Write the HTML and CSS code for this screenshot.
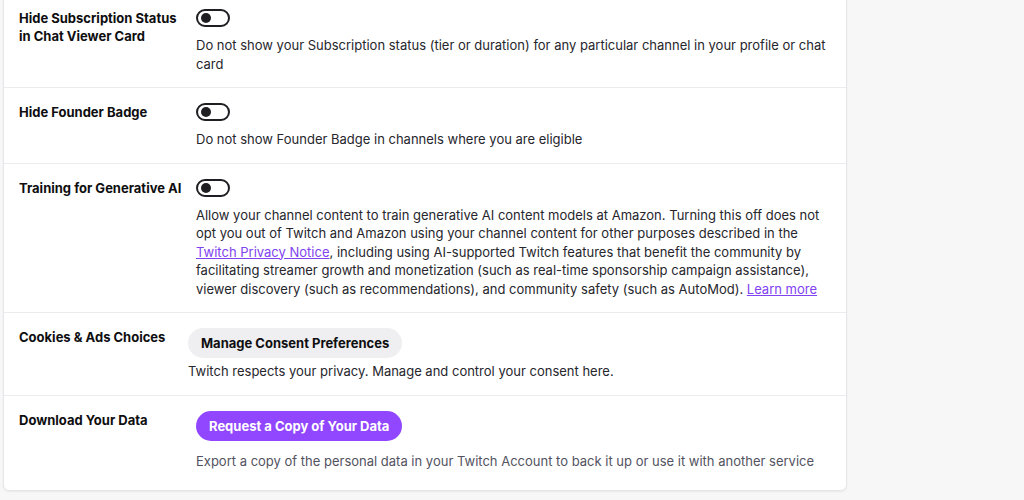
FILE: index.html
```html
<!DOCTYPE html>
<html>
<head>
<meta charset="utf-8">
<link rel="stylesheet" href="styles.css">
</head>
<body>
<div class="card">
  <div class="row">
    <div class="label">Hide Subscription Status in Chat Viewer Card</div>
    <div class="content">
      <span class="toggle"><span class="knob"></span></span>
      <p class="desc">Do not show your Subscription status (tier or duration) for any particular channel in your profile or chat card</p>
    </div>
  </div>
  <div class="row">
    <div class="label">Hide Founder Badge</div>
    <div class="content">
      <span class="toggle"><span class="knob"></span></span>
      <p class="desc">Do not show Founder Badge in channels where you are eligible</p>
    </div>
  </div>
  <div class="row">
    <div class="label">Training for Generative AI</div>
    <div class="content">
      <span class="toggle"><span class="knob"></span></span>
      <p class="desc">Allow your channel content to train generative AI content models at Amazon. Turning this off does not opt you out of Twitch and Amazon using your channel content for other purposes described in the <a href="#">Twitch Privacy Notice</a>, including using AI-supported Twitch features that benefit the community by facilitating streamer growth and monetization (such as real-time sponsorship campaign assistance), viewer discovery (such as recommendations), and community safety (such as AutoMod). <a href="#">Learn more</a></p>
    </div>
  </div>
  <div class="row">
    <div class="label">Cookies &amp; Ads Choices</div>
    <div class="content shift">
      <button class="btn btn-gray">Manage Consent Preferences</button>
      <p class="desc tight">Twitch respects your privacy. Manage and control your consent here.</p>
    </div>
  </div>
  <div class="row">
    <div class="label">Download Your Data</div>
    <div class="content">
      <button class="btn btn-purple">Request a Copy of Your Data</button>
      <p class="desc muted">Export a copy of the personal data in your Twitch Account to back it up or use it with another service</p>
    </div>
  </div>
</div>
</body>
</html>
```
FILE: styles.css
```css
html, body {
  margin: 0;
  padding: 0;
  background: #f7f7f8;
  height: 500px;
  overflow: hidden;
}
body {
  font-family: Inter, "Noto Sans", "Liberation Sans", sans-serif;
  font-size: 13px;
  color: #26262c;
}
.card {
  margin: -7px 0 0 3px;
  width: 842px;
  background: #fff;
  border: 1px solid #e6e6ea;
  border-radius: 6px;
  box-shadow: 0 1px 2px rgba(0,0,0,0.06);
}
.row {
  display: flex;
  gap: 7px;
  padding: 15px 12px 14px 15px;
  border-bottom: 1px solid #ececef;
}
.row:last-child {
  border-bottom: none;
  padding-bottom: 20px;
}
.label {
  width: 170px;
  flex-shrink: 0;
  font-weight: 700;
  color: #0e0e10;
  line-height: 18px;
}
.content {
  flex: 1;
  min-width: 0;
}
.content.shift {
  margin-left: -8px;
}
.toggle {
  display: block;
  box-sizing: border-box;
  width: 34px;
  height: 18px;
  border: 2px solid #1f1f23;
  border-radius: 9px;
  position: relative;
}
.knob {
  position: absolute;
  left: 3px;
  top: 2px;
  width: 10px;
  height: 10px;
  border-radius: 50%;
  background: #1f1f23;
}
.desc {
  margin: 9px 0 0 0;
  line-height: 18.5px;
}
.desc.tight {
  margin-top: 4px;
}
.desc.muted {
  margin-top: 11px;
  color: #53535f;
}
.desc a {
  color: #8143f0;
  text-decoration: underline;
}
.btn {
  display: block;
  font-family: inherit;
  font-size: 13px;
  font-weight: 700;
  height: 30px;
  padding: 0 13px;
  border: none;
  border-radius: 15px;
  cursor: pointer;
}
.btn-gray {
  background: #efeff1;
  color: #0e0e10;
}
.btn-purple {
  background: #9147ff;
  color: #fff;
}
```
